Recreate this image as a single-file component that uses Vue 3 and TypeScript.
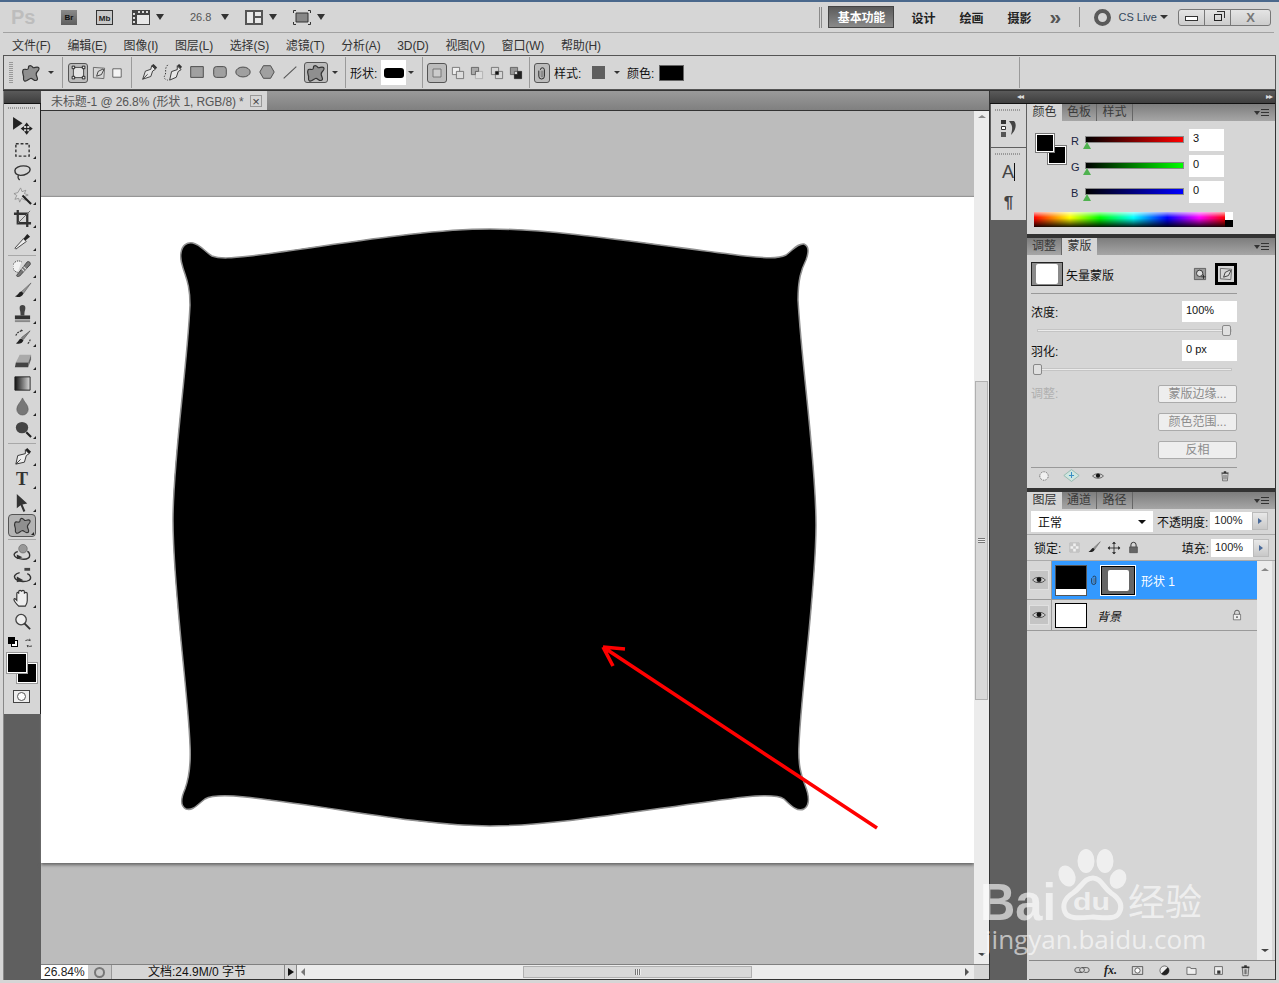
<script setup lang="ts">
import { h, type FunctionalComponent } from "vue";

type Shape = { d: string; f?: string; s?: string; w?: number; dash?: string };

// every icon is a stack of paths on a 20x20 box
const icons: Record<string, Shape[]> = {
  blob: [{ d: "M8 3c2-1.500 3 .5 4 1.500s4-1.500 5.500 0 0 3-1.500 4.500-1 3 0 5 .5 3.500-1.500 3.500-3-2.500-5-2-4 3.500-6 2.500-.5-3-1-5S1 9 2 7s4 .5 5-1 0-2 1-3z", f: "#8f8f8f", s: "#333", w: 1.2 }],
  shapeLayer: [{ d: "M4 4h12v12H4z", f: "#e4e4e4", s: "#333", w: 1 }, { d: "M2.500 2.500h3v3h-3zM14.500 2.500h3v3h-3zM2.500 14.500h3v3h-3zM14.500 14.500h3v3h-3z", f: "#eee", s: "#111", w: 1 }],
  pathMode: [{ d: "M3 3l14 1-1 13-13-1z", f: "none", s: "#555", w: 1 }, { d: "M15 5L9 8l-2 6 6-2 3-6z", f: "#ddd", s: "#222", w: 1 }],
  pixel: [{ d: "M4 4h12v12H4z", f: "#f4f4f4", s: "#333", w: 1 }],
  pen: [{ d: "M13 3l4 4-3 2-2 6-9 3 3-9 6-2z", f: "#e6e6e6", s: "#333", w: 1 }, { d: "M13 2.500l2-1.500 4 4-1.500 2z", f: "#333" }, { d: "M3 18l5.500-5.500", s: "#333", w: 1, f: "none" }],
  freePen: [{ d: "M15 3l4 4-3 2-2 6-7 3 2-9 6-2z", f: "#e6e6e6", s: "#333", w: 1 }, { d: "M15 2.500l2-1.500 3 3-1.500 2z", f: "#333" }, { d: "M5 2C1 6 4 10 2 13s1 5 3 5", f: "none", s: "#333", w: 1, dash: "1.500 1.500" }],
  rect: [{ d: "M3 4h14v12H3z", f: "#a0a0a0", s: "#444", w: 1 }],
  rrect: [{ d: "M6 4h8a3 3 0 013 3v6a3 3 0 01-3 3H6a3 3 0 01-3-3V7a3 3 0 013-3z", f: "#a0a0a0", s: "#444", w: 1 }],
  ellipse: [{ d: "M2 10a8 5.500 0 1016 0 8 5.500 0 10-16 0z", f: "#a0a0a0", s: "#444", w: 1 }],
  poly: [{ d: "M6 3h8l4 7-4 7H6l-4-7z", f: "#a0a0a0", s: "#444", w: 1 }],
  line: [{ d: "M3 17L17 4", f: "none", s: "#555", w: 1.2 }],
  opNew: [{ d: "M5 5h10v10H5z", f: "#ccc", s: "#666", w: 1 }],
  opAdd: [{ d: "M3 3h9v9H3z", f: "#eee", s: "#666", w: 1 }, { d: "M8 8h9v9H8z", f: "#ddd", s: "#666", w: 1 }],
  opSub: [{ d: "M8 8h9v9H8z", f: "#ddd", s: "#aaa", w: 1 }, { d: "M3 3h9v5H8v4H3z", f: "#aaa", s: "#555", w: 1 }],
  opAnd: [{ d: "M3 3h9v9H3zM8 8h9v9H8z", f: "none", s: "#666", w: 1 }, { d: "M8 8h4v4H8z", f: "#111" }],
  opXor: [{ d: "M3 3h9v5H8v4H3z", f: "#999", s: "#555", w: 1 }, { d: "M12 8h5v9H8v-5h4z", f: "#222", s: "#222", w: 1 }],
  clip: [{ d: "M8 6a2.500 2.500 0 015 0v8a3.500 3.500 0 01-7 0V7", f: "none", s: "#222", w: 1.2 }, { d: "M11 7v7a1 1 0 01-2 0V7", f: "none", s: "#666", w: 1 }],
  move: [{ d: "M1 1v12l9-6z", f: "#222" }, { d: "M14 7v10M9 12h10M14 7l-1.500 2h3zM14 17l-1.500-2h3zM9 12l2-1.500v3zM19 12l-2-1.500v3z", f: "#222", s: "#222", w: 1 }],
  marquee: [{ d: "M3 4h14v13H3z", f: "none", s: "#333", w: 1.500, dash: "3 2" }],
  lasso: [{ d: "M2 8c0-3 5-5 9-5s7 1 7 4-5 6-10 6-6-2-6-5z", f: "none", s: "#333", w: 1.500 }, { d: "M6 13c-1 1-1 3 1 5", f: "none", s: "#333", w: 1.500 }],
  wand: [{ d: "M8 2l1.500 4 4-1.500L12 8l4 1.500-4 1.500 1 4-4-2-2 4-1-4-4 1 2-4-3-2 4-1z", f: "#ddd", s: "#888", w: .8 }, { d: "M10 10l9 9", f: "none", s: "#222", w: 2.200 }],
  crop: [{ d: "M5 1v14h14M1 5h14v14", f: "none", s: "#333", w: 2.400 }, { d: "M5 15L18 2", f: "none", s: "#666", w: 1 }],
  dropper: [{ d: "M3 18l-1-1 9-10 3 3z", f: "#eee", s: "#444", w: 1 }, { d: "M11 7l4-5 3 3-5 4z", f: "#222" }],
  heal: [{ d: "M4 17L15 3c2-1 4 1 3 3L7 18c-2 1-4 0-3-1z", f: "#777", s: "#444", w: 1 }, { d: "M9 10l3 3M11 8l3 3", f: "none", s: "#ddd", w: 1.200 }, { d: "M9 3a6 6 0 10-4 11", f: "#f2f2f2", s: "#222", w: 1, dash: "1 1" }],
  brush: [{ d: "M19 1L9 10l2 2z", f: "#999", s: "#555", w: .6 }, { d: "M9 10c-3 0-3 4-7 5 2 1 7 2 9-3z", f: "#222" }],
  stamp: [{ d: "M7 3a3 3 0 016 0c0 3-1 3-1 8H8c0-5-1-5-1-8z", f: "#444" }, { d: "M2 11h16v4H2z", f: "#333" }, { d: "M2 16h16v2H2z", f: "#888" }],
  history: [{ d: "M18 3L9 10l2 2z", f: "#888", s: "#444", w: .6 }, { d: "M9 11c-3 0-3 4-6 5 2 1 7 1 8-3z", f: "#222" }, { d: "M3 8c1-3 4-5 7-5l-2-1M18 12c0 2-2 4-3 5", f: "none", s: "#333", w: 1.200, dash: "2 1" }],
  eraser: [{ d: "M7 4h12l-3 8H3z", f: "#aaa" }, { d: "M3 12h13v5H2z", f: "#444" }, { d: "M16 12l3-8v5l-3 8z", f: "#666" }],
  gradient: [{ d: "M2 3h16v14H2z", f: "url(#toolGrad)", s: "#222", w: 1 }],
  drop: [{ d: "M10 1c2 5 6 7 6 12a6 6 0 01-12 0c0-5 4-7 6-12z", f: "#777", s: "#555", w: .6 }],
  burn: [{ d: "M14 13l5 5", f: "none", s: "#222", w: 2.200 }, { d: "M3 8a6.500 6 0 1013 0 6.500 6 0 10-13 0z", f: "#444" }],
  penTool: [{ d: "M13 3l4 4-3 2-2 7-9 2 2-9 8-2z", f: "#eee", s: "#333", w: 1 }, { d: "M13 3l2-2 4 4-2 2z", f: "#222" }, { d: "M3 18l5-5", f: "none", s: "#333", w: 1 }],
  arrow: [{ d: "M4 1l11 10-5 1 3 7-2 1-3-7-4 3z", f: "#333" }],
  orbit: [{ d: "M6 6a4.500 4.500 0 109 0 4.500 4.500 0 10-9 0z", f: "#999", s: "#555", w: .6 }, { d: "M5 9C1 10 0 13 3 15s10 3 13 1 1-7-1-7", f: "none", s: "#333", w: 1.500 }, { d: "M4 12l6 3-6 2z", f: "#333" }],
  orbit2: [{ d: "M12 2h6v3h-6z", f: "#444" }, { d: "M7 7C2 8 0 11 3 14s11 3 14 1 1-6-2-7", f: "none", s: "#333", w: 1.500 }, { d: "M4 11l7 4-7 2z", f: "#333" }],
  hand: [{ d: "M6 18c-2-2-5-5-5-7s2 0 3 1V5c0-2 2-2 2 0V3c0-2 3-2 3 0v0c0-2 3-2 3 0v2c0-2 3-2 3 0v7c0 3-1 4-2 6z", f: "#eee", s: "#333", w: 1.200 }],
  zoom: [{ d: "M3 8a5.500 5.500 0 1011 0 5.500 5.500 0 10-11 0z", f: "#eee", s: "#444", w: 1.400 }, { d: "M12 12l6 6", f: "none", s: "#333", w: 2 }],
  swap: [{ d: "M4 6a8 8 0 018 0l-1-3M15 15a8 8 0 01-8-1l1 3", f: "none", s: "#333", w: 1.500 }],
  eye: [{ d: "M1 10c3-5 15-5 18 0-3 5-15 5-18 0z", f: "#ccc", s: "#222", w: 1 }, { d: "M6.500 9.500a3.500 3.500 0 107 0 3.500 3.500 0 10-7 0z", f: "#111" }],
  lock: [{ d: "M6 9V6a4 4 0 018 0v3", f: "none", s: "#333", w: 1.500 }, { d: "M4 9h12v9H4z", f: "#666", s: "#333", w: .8 }],
  lockLight: [{ d: "M6 9V6a4 4 0 018 0v3", f: "none", s: "#555", w: 1.500 }, { d: "M4 9h12v9H4z", f: "#eee", s: "#444", w: 1 }, { d: "M9 12h2v3H9z", f: "#333" }],
  checker: [{ d: "M3 3h14v14H3z", f: "#f0f0f0", s: "#aaa", w: 1 }, { d: "M3 3h5v5H3zM12 3h5v5h-5zM8 8h4v4H8zM3 12h5v5H3zM12 12h5v5h-5z", f: "#c4c4c4" }],
  cross: [{ d: "M10 2v16M2 10h16", f: "none", s: "#222", w: 1.200 }, { d: "M10 1l-3 3h6zM10 19l-3-3h6zM1 10l3-3v6zM19 10l-3-3v6z", f: "#222" }],
  trash: [{ d: "M5 6h10l-1 12H6z", f: "#eee", s: "#333", w: 1 }, { d: "M4 4h12v2H4zM8 2h4v2H8z", f: "#333" }, { d: "M8 8v8M10 8v8M12 8v8", f: "none", s: "#333", w: 1 }],
  link: [{ d: "M7 7H4a3 3 0 000 6h6a3 3 0 000-6M13 13h3a3 3 0 000-6h-6a3 3 0 000 6", f: "none", s: "#555", w: 1.200 }],
  maskBtn: [{ d: "M2 4h16v12H2z", f: "#ddd", s: "#222", w: 1 }, { d: "M6 10a4 4 0 108 0 4 4 0 10-8 0z", f: "#fff", s: "#222", w: 1 }],
  adjust: [{ d: "M3 10a7 7 0 1014 0 7 7 0 10-14 0z", f: "#eee", s: "#333", w: 1 }, { d: "M15 5a7 7 0 01-10 10z", f: "#222" }],
  folder: [{ d: "M3 5h5l1 2h8v9H3z", f: "#eee", s: "#333", w: 1 }],
  newLayer: [{ d: "M4 4h12v12H4z", f: "#eee", s: "#333", w: 1 }, { d: "M8 10h5v5H8z", f: "#333" }],
  loadSel: [{ d: "M2 2h16v16H2z", f: "#999", s: "#444", w: 1 }, { d: "M5 9a4.500 4.500 0 109 0 4.500 4.500 0 10-9 0z", f: "#ddd", s: "#222", w: 1.200 }, { d: "M12 14h6M15 11v6", f: "none", s: "#222", w: 1.200 }],
  dotted: [{ d: "M3 10a7 7 0 1014 0 7 7 0 10-14 0z", f: "#f0f0f0", s: "#333", w: 1.200, dash: "1.500 1.500" }],
  diamond: [{ d: "M10 3l9 7-9 7-9-7z", f: "#cfe6e0", s: "#8cb5aa", w: 1 }, { d: "M10 6v7M7 10h6", f: "none", s: "#3b8fc4", w: 1.200 }],
};

const Ico: FunctionalComponent<{ name: string; size?: number }> = (props) =>
  h(
    "svg",
    { viewBox: "0 0 20 20", width: props.size ?? 20, height: props.size ?? 20 },
    icons[props.name].map((p) =>
      h("path", { d: p.d, fill: p.f ?? "none", stroke: p.s, "stroke-width": p.w, "stroke-dasharray": p.dash }),
    ),
  );

const menus = ["文件(F)", "编辑(E)", "图像(I)", "图层(L)", "选择(S)", "滤镜(T)", "分析(A)", "3D(D)", "视图(V)", "窗口(W)", "帮助(H)"];

const toolGroups = [
  ["move:0", "marquee", "lasso", "wand", "crop", "dropper"],
  ["heal", "brush", "stamp", "history", "eraser", "gradient", "drop", "burn"],
  ["penTool", "T", "arrow", "blob"],
  ["orbit", "orbit2", "hand", "zoom:0"],
];

const shapeIcons = [
  { name: "pen", size: 18 },
  { name: "freePen", size: 19 },
  { name: "rect", size: 18 },
  { name: "rrect", size: 18 },
  { name: "ellipse", size: 18 },
  { name: "poly", size: 18 },
  { name: "line", size: 18 },
];

const layerFooter = ["link", "fx", "maskBtn", "adjust", "folder", "newLayer", "trash"];

// red arrow and the pillow live on the artboard, in page coordinates through the viewBox
const pillow =
  "M181 253C182 245 187 242 193 243C201 245 205 252 212 256C220 259 232 258 250 256C330 246 420 229 490 229C560 229 660 246 745 256C765 258 778 259 786 255C793 250 798 243 804 244C809 246 809 252 806 260C801 270 798 280 798 300C802 370 816 460 816 525C816 590 801 690 799 745C798 765 801 775 805 785C809 795 810 805 804 809C798 812 792 807 784 799C778 795 765 795 745 797C660 807 560 826 490 826C420 826 330 806 245 797C225 795 212 795 205 799C197 805 193 811 186 809C180 806 181 798 185 789C189 778 191 765 190 745C188 690 173 590 173 520C173 460 187 370 190 305C190 285 186 278 183 268C181 262 180 258 181 253Z";
</script>

<template>
  <div class="ps">
    <svg class="defs" width="0" height="0">
      <defs>
        <linearGradient id="toolGrad">
          <stop offset="0" stop-color="#111" />
          <stop offset="1" stop-color="#ddd" />
        </linearGradient>
      </defs>
    </svg>

    <header class="appbar">
      <span class="logo">Ps</span>
      <span class="br-btn">Br</span>
      <span class="mb-btn">Mb</span>
      <svg class="film" width="18" height="15" viewBox="0 0 18 15">
        <path d="M0 0h18v15H0z" fill="#444" />
        <path d="M5 5h12v9H5z" fill="#e8e8e8" />
        <path d="M1 3h2v2H1zM1 7h2v2H1zM1 11h2v2H1zM6 1h2v2H6zM10 1h2v2h-2zM14 1h2v2h-2z" fill="#ddd" />
      </svg>
      <i class="caret" />
      <span class="zoom-val">26.8</span>
      <i class="caret" />
      <svg class="arrange" width="18" height="15" viewBox="0 0 18 15">
        <path d="M0 0h18v15H0z" fill="#555" />
        <path d="M2 2h6v11H2zM10 2h6v4h-6zM10 8h6v5h-6z" fill="#e8e8e8" />
      </svg>
      <i class="caret" />
      <svg class="screen" width="18" height="15" viewBox="0 0 18 15">
        <path d="M.5 3V.5H3M15 .5h2.500V3M.5 12v2.500H3M15 14.500h2.500V12" fill="none" stroke="#333" />
        <path d="M3 3h12v9H3z" fill="#888" stroke="#333" />
      </svg>
      <i class="caret" />
      <span class="app-spacer" />
      <span class="double-rule" />
      <span class="ws-active">基本功能</span>
      <span class="ws ws-first">设计</span>
      <span class="ws">绘画</span>
      <span class="ws">摄影</span>
      <span class="more-ws">»</span>
      <span class="app-rule" />
      <span class="ring" />
      <span class="cs-live">CS Live</span>
      <i class="caret cs-caret" />
      <span class="win-btns">
        <span class="win-btn min"><i /></span>
        <span class="win-btn max"><i /></span>
        <span class="win-btn close">X</span>
      </span>
    </header>

    <nav class="menubar">
      <span v-for="m in menus" :key="m">{{ m }}</span>
    </nav>

    <div class="options">
      <span class="grip-v" />
      <span class="opt-tool"><Ico name="blob" /></span>
      <i class="caret small opt-caret" />
      <span class="opt-rule r1" />
      <span class="pressed mode-btn"><Ico name="shapeLayer" :size="17" /></span>
      <span class="mode-path"><Ico name="pathMode" :size="16" /></span>
      <span class="mode-pixel"><Ico name="pixel" :size="14" /></span>
      <span class="opt-rule r2" />
      <span class="shape-row">
        <Ico v-for="s in shapeIcons" :key="s.name" :name="s.name" :size="s.size" />
      </span>
      <span class="pressed custom-btn"><Ico name="blob" :size="20" /></span>
      <i class="caret small custom-caret" />
      <span class="opt-rule r3" />
      <span class="opt-label shape-label">形状:</span>
      <span class="shape-pick"><i /></span>
      <i class="caret small pick-caret" />
      <span class="opt-rule r4" />
      <span class="pressed op-btn"><Ico name="opNew" :size="16" /></span>
      <span class="op-row">
        <Ico name="opAdd" :size="16" />
        <Ico name="opSub" :size="16" />
        <Ico name="opAnd" :size="16" />
        <Ico name="opXor" :size="16" />
      </span>
      <span class="opt-rule r5" />
      <span class="pressed clip-btn"><Ico name="clip" :size="16" /></span>
      <span class="opt-label style-label">样式:</span>
      <span class="style-swatch" />
      <i class="caret small style-caret" />
      <span class="opt-label color-label">颜色:</span>
      <span class="color-swatch" />
      <span class="opt-spacer" />
      <span class="opt-rule end" />
    </div>

    <main class="main">
      <aside class="tools">
        <div class="panel-head" />
        <div class="tools-body">
          <span class="grip" />
          <template v-for="(group, gi) in toolGroups" :key="gi">
            <hr v-if="gi > 0" class="tool-rule" />
            <div
              v-for="t in group"
              :key="t"
              class="tool"
              :class="{ more: !t.endsWith(':0'), active: t === 'blob' }"
            >
              <span v-if="t === 'T'" class="type-t">T</span>
              <Ico v-else :name="t.split(':')[0]" :size="t === 'move:0' ? 21 : 19" />
            </div>
          </template>
          <div class="mini-colors">
            <span class="mini-swatch"><i /><b /></span>
            <Ico name="swap" :size="12" />
          </div>
          <div class="big-colors">
            <i class="bg-chip" />
            <i class="fg-chip" />
          </div>
          <div class="quick-mask"><i /></div>
        </div>
      </aside>

      <section class="doc">
        <div class="tabbar">
          <div class="tab">
            <span>未标题-1 @ 26.8% (形状 1, RGB/8) *</span>
            <span class="tab-close">×</span>
          </div>
        </div>
        <div class="view">
          <div class="pasteboard">
            <div class="artboard">
              <svg class="art" viewBox="41 197 933 666" width="933" height="666">
                <path :d="pillow" fill="#000" stroke="#909090" stroke-width="1.500" />
                <path
                  d="M877 828L603 647M603 647L625 649M603 647L613 666"
                  fill="none"
                  stroke="#ff0000"
                  stroke-width="3.600"
                />
              </svg>
            </div>
          </div>
          <div class="vscroll">
            <i class="up-arrow" />
            <span class="vthumb"><b /></span>
            <span class="fill" />
            <i class="down-arrow" />
          </div>
        </div>
        <div class="status">
          <span class="zoom-box">26.84%</span>
          <span class="status-icon"><i /></span>
          <span class="doc-info">文档:24.9M/0 字节</span>
          <span class="status-next"><i /></span>
          <div class="hscroll">
            <i class="left-arrow" />
            <span class="hthumb"><b /></span>
            <i class="right-arrow" />
          </div>
          <span class="corner" />
        </div>
      </section>

      <aside class="dock">
        <div class="dock-head"><span class="collapse">◂◂</span></div>
        <div class="dock-group g1">
          <span class="grip short" />
          <svg width="20" height="20" viewBox="0 0 20 20">
            <path d="M2 2h5v4H2z" fill="#333" />
            <path d="M2.500 8.500h4v3h-4z" fill="#fff" stroke="#333" />
            <path d="M2 14h5v5H2z" fill="#555" />
            <path d="M10 3h5c3 3 2 9-3 14 1-4 2-8 0-11z" fill="#444" />
          </svg>
        </div>
        <div class="dock-group g2">
          <span class="grip short" />
          <span class="dock-a">A<i /></span>
          <span class="dock-p">¶</span>
        </div>
      </aside>

      <aside class="panels">
        <div class="panel-head end"><span class="collapse">▸▸</span></div>

        <section class="panel color-panel">
          <div class="tabs">
            <span class="tab-item on">颜色</span>
            <span class="tab-item">色板</span>
            <span class="tab-item">样式</span>
            <span class="panel-menu"><i class="caret tiny" /><b /></span>
          </div>
          <div class="color-body">
            <div class="chips">
              <i class="chip-bg" />
              <i class="chip-fg" />
            </div>
            <div class="sliders">
              <div class="slider-row">
                <span class="rgb">R</span>
                <span class="track red"><i class="marker" /></span>
                <span class="num">3</span>
              </div>
              <div class="slider-row">
                <span class="rgb">G</span>
                <span class="track green"><i class="marker" /></span>
                <span class="num">0</span>
              </div>
              <div class="slider-row">
                <span class="rgb">B</span>
                <span class="track blue"><i class="marker" /></span>
                <span class="num">0</span>
              </div>
            </div>
          </div>
          <div class="spectrum"><i /></div>
        </section>

        <section class="panel mask-panel">
          <div class="tabs">
            <span class="tab-item">调整</span>
            <span class="tab-item on">蒙版</span>
            <span class="panel-menu"><i class="caret tiny" /><b /></span>
          </div>
          <div class="mask-head">
            <span class="mask-thumb"><i /></span>
            <span class="mask-title">矢量蒙版</span>
            <span class="mask-load"><Ico name="loadSel" :size="14" /></span>
            <span class="mask-vector"><Ico name="pathMode" :size="16" /></span>
          </div>
          <div class="mask-row first">
            <span>浓度:</span>
            <span class="mask-input pct">100%</span>
          </div>
          <div class="mask-slider"><i class="knob right" /></div>
          <div class="mask-row">
            <span>羽化:</span>
            <span class="mask-input">0 px</span>
          </div>
          <div class="mask-slider s2"><i class="knob" /></div>
          <div class="mask-adjust">
            <span class="adjust-label">调整:</span>
            <div class="mask-btns">
              <span>蒙版边缘...</span>
              <span>颜色范围...</span>
              <span>反相</span>
            </div>
          </div>
          <div class="mask-foot">
            <Ico name="dotted" :size="12" />
            <span class="foot-diamond"><Ico name="diamond" :size="17" /></span>
            <span class="foot-eye"><Ico name="eye" :size="12" /></span>
            <span class="fill" />
            <Ico name="trash" :size="12" />
          </div>
        </section>

        <section class="panel layer-panel">
          <div class="tabs">
            <span class="tab-item on">图层</span>
            <span class="tab-item">通道</span>
            <span class="tab-item">路径</span>
            <span class="panel-menu"><i class="caret tiny" /><b /></span>
          </div>
          <div class="blend-row">
            <span class="blend-select">正常<i class="caret" /></span>
            <span class="field-label">不透明度:</span>
            <span class="pct-input">100%</span>
            <span class="pct-btn"><i /></span>
          </div>
          <div class="lock-row">
            <span class="lock-label">锁定:</span>
            <span class="lock-icons">
              <Ico name="checker" :size="13" />
              <Ico name="brush" :size="14" />
              <Ico name="cross" :size="14" />
              <Ico name="lock" :size="13" />
            </span>
            <span class="fill" />
            <span class="field-label">填充:</span>
            <span class="pct-input">100%</span>
            <span class="pct-btn"><i /></span>
          </div>
          <div class="layers">
            <div class="layer-list">
              <div class="layer sel">
                <span class="eye"><Ico name="eye" :size="14" /></span>
                <div class="layer-main">
                  <span class="thumb shape"><i /></span>
                  <span class="thumb-link"><Ico name="clip" :size="12" /></span>
                  <span class="thumb vector"><i /></span>
                  <span class="layer-name">形状 1</span>
                </div>
              </div>
              <div class="layer bg">
                <span class="eye"><Ico name="eye" :size="14" /></span>
                <div class="layer-main">
                  <span class="thumb white" />
                  <em class="layer-name">背景</em>
                  <span class="fill" />
                  <span class="bg-lock"><Ico name="lockLight" :size="12" /></span>
                </div>
              </div>
            </div>
            <div class="layer-scroll">
              <i class="up-arrow" />
              <span class="fill" />
              <i class="down-arrow" />
            </div>
          </div>
          <div class="layer-foot">
            <template v-for="f in layerFooter" :key="f">
              <em v-if="f === 'fx'" class="fx">fx.</em>
              <Ico v-else :name="f" :size="f === 'link' ? 16 : 13" />
            </template>
          </div>
        </section>
      </aside>
    </main>

    <svg class="watermark" width="250" height="120" viewBox="-4 0 250 120">
      <g fill="#fff" fill-opacity=".62">
        <text x="-3" y="72" class="wm-bai" textLength="76" lengthAdjust="spacingAndGlyphs">Bai</text>
        <ellipse cx="103" cy="13" rx="8.500" ry="12" />
        <ellipse cx="122" cy="13" rx="8.500" ry="12" />
        <ellipse cx="84" cy="28" rx="8" ry="11" transform="rotate(-25 84 28)" />
        <ellipse cx="135" cy="31" rx="8" ry="10" transform="rotate(25 135 31)" />
        <path
          fill="none"
          stroke="#fff"
          stroke-opacity=".62"
          stroke-width="5"
          d="M110 30c8 0 10 9 18 15 9 6 12 13 8 20-3 6-11 5-26 4-15 1-25 2-28-5-3-7 0-14 8-19 9-6 11-15 20-15z"
        />
        <text x="90" y="62" class="wm-du" textLength="37" lengthAdjust="spacingAndGlyphs">du</text>
        <text x="145" y="68" class="wm-cn">经验</text>
        <text x="2" y="101" class="wm-url">jingyan.baidu.com</text>
      </g>
    </svg>
  </div>
</template>

<style>
html,
body {
  margin: 0;
  overflow: hidden;
}
</style>

<style scoped>
.ps {
  position: relative;
  width: 1279px;
  height: 983px;
  overflow: hidden;
  display: flex;
  flex-direction: column;
  box-sizing: border-box;
  padding-bottom: 3px;
  border-top: 2px solid #4a688c;
  background: #d6d6d6;
  font-family: "Liberation Sans", "Noto Sans CJK SC", sans-serif;
  font-size: 12px;
  color: #222;
}
.defs {
  position: absolute;
}
.fill {
  flex: 1;
}
svg {
  display: block;
  flex: none;
}
i,
b,
em {
  display: block;
}

/* carets */
.caret {
  width: 0;
  height: 0;
  flex: none;
  border-left: 4px solid transparent;
  border-right: 4px solid transparent;
  border-top: 6px solid #333;
}
.caret.small {
  border-left-width: 3px;
  border-right-width: 3px;
  border-top-width: 3px;
}
.caret.tiny {
  border-left-width: 3px;
  border-right-width: 3px;
  border-top-width: 4px;
}

/* application bar */
.appbar {
  height: 30px;
  margin: 0 5px 0 3px;
  display: flex;
  align-items: center;
  border-bottom: 1px solid #a2a2a2;
  flex: none;
}
.logo {
  margin-left: 8px;
  width: 26px;
  font: bold 20px "Liberation Sans", sans-serif;
  color: #bdbdbd;
}
.br-btn,
.mb-btn {
  font: bold 8px "Liberation Sans", sans-serif;
  width: 16px;
  height: 15px;
  line-height: 15px;
  text-align: center;
}
.br-btn {
  margin-left: 24px;
  background: linear-gradient(#8a8a8a, #5e5e5e);
  color: #111;
}
.mb-btn {
  margin-left: 19px;
  width: 17px;
  border: 1px solid #333;
  box-sizing: border-box;
  background: #c8c8c8;
}
.film {
  margin-left: 19px;
}
.film + .caret {
  margin-left: 6px;
}
.zoom-val {
  margin-left: 26px;
  width: 22px;
  color: #555;
  font-size: 11px;
}
.zoom-val + .caret {
  margin-left: 9px;
}
.arrange {
  margin-left: 16px;
}
.arrange + .caret {
  margin-left: 6px;
}
.screen {
  margin-left: 16px;
}
.screen + .caret {
  margin-left: 6px;
}
.app-spacer {
  flex: 1;
}
.double-rule {
  width: 1px;
  height: 21px;
  border: solid #8a8a8a;
  border-width: 0 1px;
  margin-right: 6px;
}
.ws-active {
  width: 66px;
  height: 22px;
  line-height: 22px;
  text-align: center;
  color: #fff;
  font-weight: bold;
  box-sizing: border-box;
  border: 1px solid #444;
  background: linear-gradient(#5b5b5b, #8a8a8a);
  letter-spacing: -0.2px;
}
.ws {
  width: 24px;
  margin-left: 24px;
  font-weight: bold;
  color: #222;
  white-space: nowrap;
}
.ws-first {
  margin-left: 17px;
}
.more-ws {
  margin-left: 18px;
  width: 15px;
  font: bold 21px/18px "Liberation Sans", sans-serif;
  color: #555;
}
.app-rule {
  width: 1px;
  height: 20px;
  margin-left: 15px;
  background: #8a8a8a;
}
.ring {
  width: 17px;
  height: 17px;
  margin-left: 14px;
  box-sizing: border-box;
  border: 4px solid #5a5a5a;
  border-radius: 50%;
}
.cs-live {
  margin-left: 7px;
  font-size: 11px;
  color: #33465a;
}
.cs-caret {
  margin-left: 3px;
  border-left-width: 4px;
  border-right-width: 4px;
  border-top-width: 4px;
}
.win-btns {
  margin-left: 10px;
  margin-right: 3px;
  width: 93px;
  height: 17px;
  display: flex;
  box-sizing: border-box;
  border: 1px solid #777;
  border-radius: 3px;
  background: linear-gradient(#e4e4e4, #cdcdcd);
}
.win-btn {
  display: flex;
  align-items: center;
  justify-content: center;
  border-right: 1px solid #777;
}
.win-btn.min {
  width: 25px;
}
.win-btn.min i {
  width: 11px;
  height: 3px;
  border: 1px solid #333;
  background: #fff;
  margin-top: 3px;
}
.win-btn.max {
  width: 25px;
}
.win-btn.max i {
  width: 6px;
  height: 5px;
  border: 1px solid #222;
  box-shadow: 2px -2px 0 -0px #ddd, 3px -3px 0 0 #333;
}
.win-btn.close {
  flex: 1;
  border: 0;
  font: bold 13px "Liberation Sans", sans-serif;
  color: #777;
}

/* menu */
.menubar {
  height: 22px;
  box-sizing: border-box;
  padding: 2px 0 0 12px;
  display: flex;
  align-items: baseline;
  gap: 16.7px;
  flex: none;
  color: #333;
  white-space: nowrap;
  font-size: 12px;
}
.menubar span {
  letter-spacing: -0.12px;
  line-height: 22px;
}

/* options bar */
.options {
  height: 33px;
  margin: 0 3px;
  flex: none;
  display: flex;
  align-items: center;
  border: 1px solid #555;
  white-space: nowrap;
}
.grip-v {
  width: 4px;
  height: 22px;
  margin-left: 5px;
  background: repeating-linear-gradient(#999 0 1px, transparent 1px 2px);
}
.opt-tool {
  margin-left: 8px;
}
.opt-caret {
  margin-left: 7px;
}
.opt-rule {
  width: 1px;
  height: 31px;
  background: #9a9a9a;
  flex: none;
}
.r1 {
  margin-left: 8px;
}
.pressed {
  display: flex;
  align-items: center;
  justify-content: center;
  box-sizing: border-box;
  border: 1px solid #555;
  border-radius: 3px;
  background: #bcbcbc;
}
.mode-btn {
  width: 20px;
  height: 20px;
  margin-left: 5px;
}
.mode-path {
  margin-left: 3px;
}
.mode-pixel {
  margin-left: 3px;
}
.r2 {
  margin-left: 7px;
}
.shape-row {
  margin-left: 8px;
  width: 159px;
  display: flex;
  justify-content: space-between;
}
.custom-btn {
  width: 24px;
  height: 21px;
  margin-left: 5px;
}
.custom-caret {
  margin-left: 4px;
}
.r3 {
  margin-left: 7px;
}
.opt-label {
  color: #111;
}
.shape-label {
  margin-left: 4px;
  width: 31px;
}
.shape-pick {
  width: 25px;
  height: 25px;
  background: #fff;
  display: flex;
  align-items: center;
  justify-content: center;
}
.shape-pick i {
  width: 20px;
  height: 10px;
  background: #000;
  border-radius: 3px;
}
.pick-caret {
  margin-left: 2px;
}
.r4 {
  margin-left: 8px;
}
.op-btn {
  width: 20px;
  height: 20px;
  margin-left: 4px;
}
.op-row {
  margin-left: 3px;
  display: flex;
  width: 74px;
  justify-content: space-between;
}
.r5 {
  margin-left: 5px;
}
.clip-btn {
  width: 16px;
  height: 20px;
  margin-left: 4px;
}
.style-label {
  margin-left: 4px;
  width: 38px;
}
.style-swatch {
  width: 13px;
  height: 13px;
  background: #5f5f5f;
}
.style-caret {
  margin-left: 9px;
}
.color-label {
  margin-left: 7px;
  width: 32px;
}
.color-swatch {
  width: 25px;
  height: 16px;
  box-sizing: border-box;
  background: #000;
  border: 1px solid #666;
}
.opt-spacer {
  flex: 1;
}
.opt-rule.end {
  margin-right: 255px;
}

/* main area */
.main {
  flex: 1;
  min-height: 0;
  display: flex;
  margin: 0 3px;
  background: #5f5f5f;
  border-top: 1px solid #333;
}

/* tools */
.tools {
  width: 38px;
  flex: none;
  box-sizing: border-box;
  border-left: 1px solid #888;
}
.panel-head {
  height: 12px;
  background: linear-gradient(#5a5a5a, #3e3e3e);
  border-bottom: 1px solid #111;
  position: relative;
}
.panel-head.end .collapse {
  right: 3px;
}
.collapse {
  position: absolute;
  top: 0;
  font: 8px/12px "DejaVu Sans", sans-serif;
  color: #ddd;
  letter-spacing: -1px;
}
.tools-body {
  height: 610px;
  padding-top: 11px;
  box-sizing: border-box;
  position: relative;
  background: #d6d6d6;
  border-right: 1px solid #222;
}
.grip {
  position: absolute;
  top: 3px;
  left: 4px;
  right: 4px;
  height: 2px;
  background: repeating-linear-gradient(90deg, #999 0 1px, transparent 1px 2px);
}
.tool {
  position: relative;
  height: 23px;
  display: flex;
  align-items: center;
  justify-content: center;
  box-sizing: border-box;
}
.tool.more::after {
  content: "";
  position: absolute;
  right: 4px;
  bottom: 2px;
  border-left: 3px solid transparent;
  border-bottom: 3px solid #222;
}
.tool.active {
  margin: 0 4px;
  border: 1px solid #555;
  border-radius: 4px;
  background: #b4b4b4;
}
.tool.active::after {
  right: 1px;
  bottom: 1px;
}
.tool-rule {
  margin: 2px 4px 1px;
  border: 0;
  height: 1px;
  background: #a8a8a8;
}
.type-t {
  font: bold 18px "Liberation Serif", serif;
  color: #333;
}
.mini-colors {
  height: 14px;
  margin-top: 4px;
  padding: 0 5px 0 4px;
  display: flex;
  justify-content: space-between;
}
.mini-swatch {
  position: relative;
  width: 11px;
  height: 11px;
}
.mini-swatch i,
.mini-swatch b {
  position: absolute;
  width: 7px;
  height: 7px;
}
.mini-swatch b {
  left: 3px;
  top: 3px;
  background: #fff;
  border: 1px solid #000;
  box-sizing: border-box;
}
.mini-swatch i {
  background: #000;
  z-index: 1;
}
.big-colors {
  position: relative;
  width: 30px;
  height: 31px;
  margin: 2px 0 0 3px;
}
.fg-chip,
.bg-chip {
  position: absolute;
  width: 20px;
  height: 20px;
  box-sizing: border-box;
  background: #000;
  border: 1px solid #fff;
  outline: 1px solid #999;
}
.bg-chip {
  left: 10px;
  top: 10px;
}
.quick-mask {
  width: 17px;
  height: 13px;
  margin: 6px 0 0 9px;
  box-sizing: border-box;
  border: 1px solid #444;
  background: #eee;
  display: flex;
  align-items: center;
  justify-content: center;
}
.quick-mask i {
  width: 7px;
  height: 7px;
  border-radius: 50%;
  border: 1px solid #555;
  background: #fff;
}

/* document */
.doc {
  width: 949px;
  flex: none;
  display: flex;
  flex-direction: column;
  border-right: 1px solid #333;
  box-sizing: border-box;
}
.tabbar {
  height: 20px;
  flex: none;
  box-sizing: border-box;
  background: linear-gradient(#9a9a9a, #808080);
  border-bottom: 1px solid #333;
}
.tab {
  width: 226px;
  height: 19px;
  padding-left: 10px;
  box-sizing: border-box;
  display: flex;
  align-items: center;
  justify-content: space-between;
  padding-right: 5px;
  background: #d6d6d6;
  color: #555;
  white-space: nowrap;
  font-size: 12px;
  letter-spacing: -0.1px;
}
.tab-close {
  width: 12px;
  height: 12px;
  line-height: 11px;
  text-align: center;
  box-sizing: border-box;
  border: 1px solid #999;
  color: #444;
  font-size: 13px;
}
.view {
  flex: 1;
  min-height: 0;
  display: flex;
}
.pasteboard {
  flex: 1;
  min-width: 0;
  padding-top: 86px;
  background: #bcbcbc;
}
.artboard {
  height: 666px;
  background: #fff;
  box-shadow: 0 2px 3px #666, 0 -1px 1px #999;
}
.vscroll {
  width: 15px;
  flex: none;
  display: flex;
  flex-direction: column;
  align-items: stretch;
  background: #ececec;
}
.up-arrow,
.down-arrow {
  width: 0;
  height: 0;
  align-self: center;
  border-left: 4px solid transparent;
  border-right: 4px solid transparent;
}
.up-arrow {
  margin-top: 4px;
  border-bottom: 3px solid #888;
}
.down-arrow {
  margin-bottom: 8px;
  border-top: 3px solid #444;
}
.vthumb {
  margin: 263px 1px 0;
  height: 319px;
  flex: none;
  box-sizing: border-box;
  border: 1px solid #b0b0b0;
  background: #d8d8d8;
  display: flex;
  align-items: center;
  justify-content: center;
}
.vthumb b {
  width: 7px;
  height: 5px;
  background: repeating-linear-gradient(#777 0 1px, #eee 1px 2px);
}
.status {
  height: 16px;
  flex: none;
  display: flex;
  align-items: stretch;
  box-sizing: border-box;
  border-top: 1px solid #808080;
  border-bottom: 1px solid #333;
  background: #d6d6d6;
}
.zoom-box {
  width: 47px;
  line-height: 15px;
  padding-left: 3px;
  box-sizing: border-box;
  background: #fff;
  font-size: 12px;
}
.status-icon {
  width: 23px;
  display: flex;
  align-items: center;
  justify-content: center;
  border-right: 1px solid #999;
  background: #cacaca;
}
.status-icon i {
  width: 11px;
  height: 11px;
  border: 2px solid #777;
  border-radius: 50%;
  box-sizing: border-box;
}
.doc-info {
  width: 172px;
  padding-left: 36px;
  box-sizing: border-box;
  line-height: 15px;
  color: #111;
  white-space: nowrap;
}
.status-next {
  width: 13px;
  display: flex;
  align-items: center;
  justify-content: center;
  border-left: 1px solid #888;
  border-right: 1px solid #888;
  box-sizing: border-box;
}
.status-next i,
.pct-btn i {
  border-top: 4px solid transparent;
  border-bottom: 4px solid transparent;
  border-left: 6px solid #111;
}
.hscroll {
  flex: 1;
  display: flex;
  align-items: center;
  background: #ececec;
  position: relative;
}
.left-arrow,
.right-arrow {
  border-top: 4px solid transparent;
  border-bottom: 4px solid transparent;
}
.left-arrow {
  margin-left: 4px;
  border-right: 4px solid #777;
}
.right-arrow {
  margin-right: 5px;
  margin-left: auto;
  border-left: 4px solid #555;
}
.hthumb {
  margin-left: 218px;
  width: 229px;
  height: 12px;
  box-sizing: border-box;
  border: 1px solid #b0b0b0;
  background: #d8d8d8;
  display: flex;
  align-items: center;
  justify-content: center;
}
.hthumb b {
  width: 6px;
  height: 6px;
  background: repeating-linear-gradient(90deg, #777 0 1px, #eee 1px 2px);
}
.corner {
  width: 15px;
  background: #d6d6d6;
}

/* dock */
.dock {
  width: 37px;
  flex: none;
}
.dock-head {
  height: 12px;
  position: relative;
  background: linear-gradient(#5a5a5a, #3e3e3e);
  border-bottom: 1px solid #111;
}
.dock-head .collapse {
  right: 4px;
}
.dock-group {
  position: relative;
  margin: 0 1px 1px 1px;
  background: #d6d6d6;
  display: flex;
  flex-direction: column;
  align-items: center;
}
.g1 {
  height: 43px;
  padding-top: 14px;
  box-sizing: border-box;
}
.g2 {
  height: 72px;
  padding-top: 14px;
  box-sizing: border-box;
}
.grip.short {
  top: 5px;
  left: 4px;
  right: 5px;
}
.dock-a {
  display: flex;
  align-items: center;
  font: 18px/20px "Liberation Sans", sans-serif;
  color: #444;
}
.dock-a i {
  width: 1px;
  height: 18px;
  background: #111;
}
.dock-p {
  margin-top: 11px;
  font: bold 17px/20px "Liberation Sans", sans-serif;
  color: #444;
}

/* panels */
.panels {
  width: 249px;
  flex: none;
  display: flex;
  flex-direction: column;
  box-sizing: border-box;
  border-right: 1px solid #333;
  background: #333;
}
.panel {
  background: #d6d6d6;
  margin-bottom: 4px;
  flex: none;
}
.panels .panel-head {
  background: linear-gradient(#5a5a5a, #3e3e3e);
}
.tabs {
  height: 17px;
  display: flex;
  background: linear-gradient(#7d7d7d, #a6a6a6);
  position: relative;
}
.tab-item {
  width: 35px;
  line-height: 17px;
  text-align: center;
  box-sizing: border-box;
  border-right: 1px solid #666;
  color: #3a3a3a;
}
.tab-item:nth-child(3) {
  width: 36px;
}
.tab-item.on {
  background: #d6d6d6;
  color: #333;
  border-right: 0;
}
.panel-menu {
  position: absolute;
  right: 6px;
  top: 5px;
  display: flex;
  align-items: center;
  gap: 1px;
}
.panel-menu b {
  width: 8px;
  height: 7px;
  background: repeating-linear-gradient(#333 0 1px, transparent 1px 3px);
}

/* color panel */
.color-panel {
  height: 130px;
}
.color-body {
  height: 91px;
  display: flex;
}
.chips {
  position: relative;
  width: 30px;
  height: 30px;
  margin: 13px 0 0 9px;
}
.chip-fg,
.chip-bg {
  position: absolute;
  width: 18px;
  height: 18px;
  box-sizing: border-box;
  background: #000;
  border: 1px solid #fff;
  outline: 1px solid #777;
}
.chip-bg {
  left: 12px;
  top: 12px;
}
.sliders {
  margin: 8px 0 0 5px;
  display: flex;
  flex-direction: column;
  gap: 4px;
}
.slider-row {
  height: 22px;
  display: flex;
  align-items: center;
}
.rgb {
  width: 14px;
  font-size: 11px;
  color: #1a2440;
  margin-top: 2px;
}
.track {
  position: relative;
  width: 97px;
  height: 5px;
  margin-right: 5px;
  border: 1px solid #888;
  box-sizing: content-box;
  margin-top: -2px;
}
.track.red {
  background: linear-gradient(90deg, #000, #f00);
}
.track.green {
  background: linear-gradient(90deg, #000, #0f0);
}
.track.blue {
  background: linear-gradient(90deg, #000, #00f);
}
.marker {
  position: absolute;
  left: -3px;
  top: 5px;
  width: 0;
  height: 0;
  border-left: 4px solid transparent;
  border-right: 4px solid transparent;
  border-bottom: 7px solid #4fb24f;
}
.num {
  width: 35px;
  height: 22px;
  line-height: 18px;
  padding-left: 4px;
  box-sizing: border-box;
  background: #fff;
  font-size: 11px;
  color: #111;
}
.spectrum {
  position: relative;
  width: 199px;
  height: 15px;
  margin-left: 7px;
  background: linear-gradient(#ffffffb0, #ffffff00 35%, #00000000 40%, #000000e8),
    linear-gradient(90deg, #f00, #ff0 18%, #0f0 33%, #0ff 50%, #00f 67%, #f0f 83%, #f00 96%);
}
.spectrum i {
  position: absolute;
  right: 0;
  top: 0;
  width: 8px;
  height: 15px;
  background: linear-gradient(#fff 50%, #000 50%);
}

/* mask panel */
.mask-panel {
  height: 250px;
  box-sizing: border-box;
}
.mask-head {
  height: 39px;
  margin: 0 38px 0 4px;
  display: flex;
  align-items: center;
  border-bottom: 1px solid #999;
  width: 206px;
  box-sizing: border-box;
}
.mask-thumb {
  width: 32px;
  height: 24px;
  box-sizing: border-box;
  border: 1px solid #222;
  background: #8a8a8a;
  display: flex;
  align-items: center;
  justify-content: center;
}
.mask-thumb i {
  width: 22px;
  height: 20px;
  background: #fff;
  border-radius: 2px;
}
.mask-title {
  margin-left: 3px;
  width: 127px;
  color: #111;
}
.mask-load {
  width: 14px;
}
.mask-vector {
  width: 22px;
  height: 22px;
  margin-left: 8px;
  flex: none;
  box-sizing: border-box;
  border: 3px solid #000;
  background: #d6d6d6;
  display: flex;
  align-items: center;
  justify-content: center;
}
.mask-row {
  width: 206px;
  height: 21px;
  margin: 0 0 0 4px;
  display: flex;
  align-items: center;
  justify-content: space-between;
  color: #111;
}
.mask-row.first {
  margin-top: 7px;
}
.mask-input {
  width: 55px;
  height: 21px;
  line-height: 18px;
  padding-left: 4px;
  box-sizing: border-box;
  background: #fff;
  font-size: 11px;
}
.mask-slider {
  position: relative;
  width: 195px;
  height: 3px;
  margin: 7px 0 8px 10px;
  background: #ececec;
  border: 1px solid #c4c4c4;
  box-sizing: border-box;
}
.knob {
  position: absolute;
  left: -5px;
  top: -5px;
  width: 9px;
  height: 11px;
  box-sizing: border-box;
  border: 1px solid #888;
  border-radius: 2px;
  background: #e0e0e0;
}
.knob.right {
  left: auto;
  right: 0;
}
.mask-adjust {
  width: 206px;
  margin: 14px 0 0 4px;
  display: flex;
  justify-content: space-between;
  box-sizing: border-box;
}
.adjust-label {
  color: #b0b0b0;
  line-height: 18px;
}
.mask-btns {
  display: flex;
  flex-direction: column;
  gap: 10px;
}
.mask-btns span {
  width: 79px;
  height: 18px;
  line-height: 16px;
  text-align: center;
  box-sizing: border-box;
  border: 1px solid #ababab;
  border-radius: 2px;
  background: #eeeeee;
  color: #8c8c8c;
}
.mask-foot {
  width: 206px;
  height: 16px;
  margin: 8px 0 0 4px;
  padding: 0 6px 0 7px;
  box-sizing: border-box;
  display: flex;
  align-items: center;
  border-top: 1px solid #999;
}
.foot-diamond {
  margin-left: 13px;
}
.foot-eye {
  margin-left: 12px;
}

/* layers panel */
.layer-panel {
  flex: 1;
  margin-bottom: 0;
  display: flex;
  flex-direction: column;
  min-height: 0;
}
.blend-row {
  height: 26px;
  box-sizing: border-box;
  display: flex;
  align-items: center;
  padding-left: 4px;
  border-bottom: 1px solid #aaa;
}
.blend-select {
  width: 122px;
  height: 21px;
  padding: 0 7px;
  box-sizing: border-box;
  display: flex;
  align-items: center;
  justify-content: space-between;
  background: #fff;
  color: #111;
}
.blend-select .caret {
  border-left-width: 4px;
  border-right-width: 4px;
  border-top-width: 4px;
  border-top-color: #111;
}
.field-label {
  margin-left: 4px;
  color: #111;
  white-space: nowrap;
}
.pct-input {
  width: 42px;
  height: 18px;
  margin-left: 2px;
  line-height: 17px;
  padding-left: 4px;
  box-sizing: border-box;
  background: #fff;
  font-size: 11px;
}
.pct-btn {
  width: 16px;
  height: 18px;
  margin-right: 6px;
  display: flex;
  align-items: center;
  justify-content: center;
  box-sizing: border-box;
  border: 1px solid #bbb;
  background: linear-gradient(#e8e8e8, #c8c8c8);
}
.pct-btn i {
  border-left-color: #4a6a9a;
  border-top-width: 3px;
  border-bottom-width: 3px;
  border-left-width: 4px;
}
.blend-row .pct-input,
.blend-row .pct-btn {
  margin-top: -2px;
}
.lock-row {
  height: 26px;
  display: flex;
  align-items: center;
  padding-left: 7px;
  border-bottom: 1px solid #aaa;
  box-sizing: border-box;
}
.lock-label {
  width: 34px;
  color: #111;
}
.lock-icons {
  display: flex;
  gap: 6px;
  width: 76px;
  align-items: center;
}
.layers {
  flex: 1;
  min-height: 0;
  display: flex;
}
.layer-list {
  flex: 1;
  min-width: 0;
}
.layer {
  display: flex;
  box-sizing: border-box;
  border-bottom: 1px solid #9a9a9a;
}
.layer.sel {
  height: 39px;
}
.layer.bg {
  height: 31px;
}
.eye {
  width: 25px;
  flex: none;
  display: flex;
  align-items: center;
  justify-content: center;
  border-right: 1px solid #9a9a9a;
  box-sizing: border-box;
}
.eye svg {
  padding: 2px;
  background: #c4c4c4;
  border: 1px solid #e0e0e0;
}
.layer-main {
  flex: 1;
  display: flex;
  align-items: center;
  padding-left: 3px;
  min-width: 0;
}
.sel .layer-main {
  background: #3399ff;
  color: #fff;
}
.thumb {
  display: block;
  box-sizing: border-box;
  flex: none;
}
.thumb.shape {
  width: 32px;
  height: 31px;
  background: #000;
  border: 1px solid #555;
  position: relative;
}
.thumb.shape i {
  position: absolute;
  left: 0;
  right: 0;
  bottom: 0;
  height: 7px;
  background: #fff;
  border-top: 1px solid #000;
  box-sizing: border-box;
}
.thumb-link {
  width: 13px;
  display: flex;
  justify-content: center;
}
.thumb.vector {
  width: 36px;
  height: 31px;
  background: #666;
  border: 2px solid #000;
  outline: 1px solid #fff;
  outline-offset: -1px;
  display: flex;
  align-items: center;
  justify-content: center;
}
.thumb.vector i {
  width: 21px;
  height: 21px;
  background: #fff;
  border-radius: 2px;
}
.layer-name {
  margin-left: 5px;
}
.thumb.white {
  width: 32px;
  height: 25px;
  background: #fff;
  border: 1px solid #000;
}
.layer.bg em.layer-name {
  margin-left: 10px;
  font-style: italic;
  color: #111;
}
.bg-lock {
  margin-right: 14px;
}
.layer-scroll {
  width: 15px;
  margin-right: 3px;
  flex: none;
  display: flex;
  flex-direction: column;
  background: #ececec;
}
.layer-scroll .up-arrow {
  margin-top: 7px;
}
.layer-foot {
  height: 18px;
  flex: none;
  margin-left: 2px;
  padding-left: 45px;
  display: flex;
  align-items: center;
  gap: 14px;
  border-top: 1px solid #888;
  border-bottom: 1px solid #555;
}
.fx {
  font: italic bold 12px "Liberation Serif", serif;
  color: #222;
}

/* watermark over everything */
.watermark {
  position: absolute;
  left: 979px;
  top: 846px;
  pointer-events: none;
}
.wm-bai {
  font: bold 52px "Liberation Sans", sans-serif;
}
.wm-du {
  font: bold 24px "Liberation Sans", sans-serif;
}
.wm-cn {
  font: 37px "Noto Sans CJK SC", sans-serif;
}
.wm-url {
  font: 26px "Open Sans", sans-serif;
}
</style>
